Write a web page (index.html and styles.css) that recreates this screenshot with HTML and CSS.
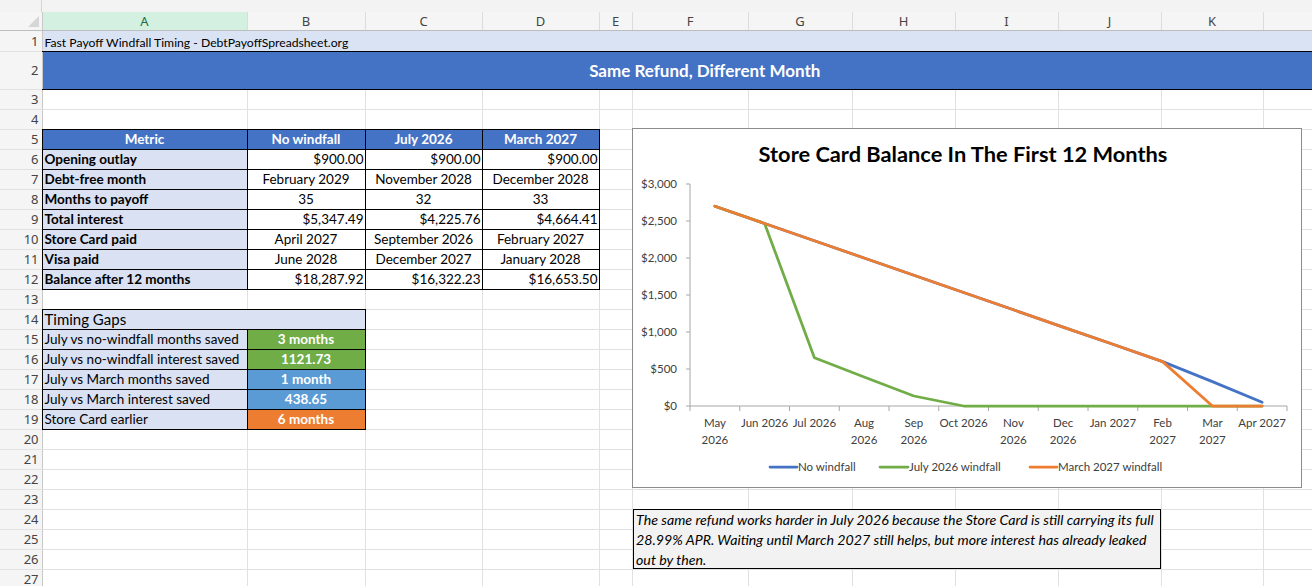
FILE: index.html
```html
<!DOCTYPE html>
<html lang="en">
<head>
    <meta charset="UTF-8">
    <meta name="viewport" content="width=device-width, initial-scale=1.0">
    <title>Fast Payoff Windfall Timing</title>
    <link rel="stylesheet" href="styles.css">
</head>
<body>
<div class="window">
    <div class="strip"><div class="strip-corner"></div></div>
    <table class="grid">
        <colgroup>
            <col class="w-rh"><col class="w-a"><col class="w-b"><col class="w-c"><col class="w-d"><col class="w-e">
            <col class="w-f"><col class="w-g"><col class="w-h"><col class="w-i"><col class="w-j"><col class="w-k"><col class="w-l">
        </colgroup>
        <tr class="colhead">
            <th class="corner"><span class="tri"></span></th>
            <th class="sel">A</th><th>B</th><th>C</th><th>D</th><th>E</th><th>F</th>
            <th>G</th><th>H</th><th>I</th><th>J</th><th>K</th><th></th>
        </tr>
        <tr class="r1"><th>1</th><td colspan="12" class="title-bar">Fast Payoff Windfall Timing - DebtPayoffSpreadsheet.org</td></tr>
        <tr class="r2"><th>2</th><td colspan="12" class="b banner">Same Refund, Different Month</td></tr>
        <tr><th>3</th><td></td><td></td><td></td><td></td><td></td><td></td><td></td><td></td><td></td><td></td><td></td><td></td></tr>
        <tr><th>4</th><td></td><td></td><td></td><td></td><td></td><td></td><td></td><td></td><td></td><td></td><td></td><td></td></tr>
        <tr><th>5</th>
            <td class="b hd">Metric</td><td class="b hd">No windfall</td><td class="b hd">July 2026</td><td class="b hd">March 2027</td>
            <td></td><td></td><td></td><td></td><td></td><td></td><td></td><td></td></tr>
        <tr><th>6</th>
            <td class="b lbl">Opening outlay</td><td class="b num">$900.00</td><td class="b num">$900.00</td><td class="b num">$900.00</td>
            <td></td><td></td><td></td><td></td><td></td><td></td><td></td><td></td></tr>
        <tr><th>7</th>
            <td class="b lbl">Debt-free month</td><td class="b mid">February 2029</td><td class="b mid">November 2028</td><td class="b mid">December 2028</td>
            <td></td><td></td><td></td><td></td><td></td><td></td><td></td><td></td></tr>
        <tr><th>8</th>
            <td class="b lbl">Months to payoff</td><td class="b mid">35</td><td class="b mid">32</td><td class="b mid">33</td>
            <td></td><td></td><td></td><td></td><td></td><td></td><td></td><td></td></tr>
        <tr><th>9</th>
            <td class="b lbl">Total interest</td><td class="b num">$5,347.49</td><td class="b num">$4,225.76</td><td class="b num">$4,664.41</td>
            <td></td><td></td><td></td><td></td><td></td><td></td><td></td><td></td></tr>
        <tr><th>10</th>
            <td class="b lbl">Store Card paid</td><td class="b mid">April 2027</td><td class="b mid">September 2026</td><td class="b mid">February 2027</td>
            <td></td><td></td><td></td><td></td><td></td><td></td><td></td><td></td></tr>
        <tr><th>11</th>
            <td class="b lbl">Visa paid</td><td class="b mid">June 2028</td><td class="b mid">December 2027</td><td class="b mid">January 2028</td>
            <td></td><td></td><td></td><td></td><td></td><td></td><td></td><td></td></tr>
        <tr><th>12</th>
            <td class="b lbl">Balance after 12 months</td><td class="b num">$18,287.92</td><td class="b num">$16,322.23</td><td class="b num">$16,653.50</td>
            <td></td><td></td><td></td><td></td><td></td><td></td><td></td><td></td></tr>
        <tr><th>13</th><td></td><td></td><td></td><td></td><td></td><td></td><td></td><td></td><td></td><td></td><td></td><td></td></tr>
        <tr><th>14</th>
            <td colspan="2" class="b gap-title">Timing Gaps</td>
            <td></td><td></td><td></td><td></td><td></td><td></td><td></td><td></td><td></td><td></td></tr>
        <tr><th>15</th>
            <td class="b gap">July vs no-windfall months saved</td><td class="b badge green">3 months</td>
            <td></td><td></td><td></td><td></td><td></td><td></td><td></td><td></td><td></td><td></td></tr>
        <tr><th>16</th>
            <td class="b gap">July vs no-windfall interest saved</td><td class="b badge green">1121.73</td>
            <td></td><td></td><td></td><td></td><td></td><td></td><td></td><td></td><td></td><td></td></tr>
        <tr><th>17</th>
            <td class="b gap">July vs March months saved</td><td class="b badge blue">1 month</td>
            <td></td><td></td><td></td><td></td><td></td><td></td><td></td><td></td><td></td><td></td></tr>
        <tr><th>18</th>
            <td class="b gap">July vs March interest saved</td><td class="b badge blue">438.65</td>
            <td></td><td></td><td></td><td></td><td></td><td></td><td></td><td></td><td></td><td></td></tr>
        <tr><th>19</th>
            <td class="b gap">Store Card earlier</td><td class="b badge orange">6 months</td>
            <td></td><td></td><td></td><td></td><td></td><td></td><td></td><td></td><td></td><td></td></tr>
        <tr><th>20</th><td></td><td></td><td></td><td></td><td></td><td></td><td></td><td></td><td></td><td></td><td></td><td></td></tr>
        <tr><th>21</th><td></td><td></td><td></td><td></td><td></td><td></td><td></td><td></td><td></td><td></td><td></td><td></td></tr>
        <tr><th>22</th><td></td><td></td><td></td><td></td><td></td><td></td><td></td><td></td><td></td><td></td><td></td><td></td></tr>
        <tr><th>23</th><td></td><td></td><td></td><td></td><td></td><td></td><td></td><td></td><td></td><td></td><td></td><td></td></tr>
        <tr><th>24</th><td></td><td></td><td></td><td></td><td></td><td></td><td></td><td></td><td></td><td></td><td></td><td></td></tr>
        <tr><th>25</th><td></td><td></td><td></td><td></td><td></td><td></td><td></td><td></td><td></td><td></td><td></td><td></td></tr>
        <tr><th>26</th><td></td><td></td><td></td><td></td><td></td><td></td><td></td><td></td><td></td><td></td><td></td><td></td></tr>
        <tr><th>27</th><td></td><td></td><td></td><td></td><td></td><td></td><td></td><td></td><td></td><td></td><td></td><td></td></tr>
    </table>

    <!-- chart object floating over the sheet -->
    <div class="chart">
        <svg width="668" height="358" viewBox="0 0 668 358">
            <text class="chart-title" x="330" y="33" text-anchor="middle">Store Card Balance In The First 12 Months</text>

            <g class="ylabels" text-anchor="end">
                <text x="44" y="59">$3,000</text>
                <text x="44" y="96">$2,500</text>
                <text x="44" y="133">$2,000</text>
                <text x="44" y="170">$1,500</text>
                <text x="44" y="207">$1,000</text>
                <text x="44" y="244">$500</text>
                <text x="44" y="281">$0</text>
            </g>

            <g class="axis">
                <line x1="57" y1="55" x2="57" y2="277"/>
                <line x1="53" y1="55" x2="57" y2="55"/>
                <line x1="53" y1="92" x2="57" y2="92"/>
                <line x1="53" y1="129" x2="57" y2="129"/>
                <line x1="53" y1="166" x2="57" y2="166"/>
                <line x1="53" y1="203" x2="57" y2="203"/>
                <line x1="53" y1="240" x2="57" y2="240"/>
                <line x1="53" y1="277" x2="654" y2="277"/>
                <line x1="57" y1="277" x2="57" y2="282"/>
                <line x1="106.75" y1="277" x2="106.75" y2="282"/>
                <line x1="156.5" y1="277" x2="156.5" y2="282"/>
                <line x1="206.25" y1="277" x2="206.25" y2="282"/>
                <line x1="256" y1="277" x2="256" y2="282"/>
                <line x1="305.75" y1="277" x2="305.75" y2="282"/>
                <line x1="355.5" y1="277" x2="355.5" y2="282"/>
                <line x1="405.25" y1="277" x2="405.25" y2="282"/>
                <line x1="455" y1="277" x2="455" y2="282"/>
                <line x1="504.75" y1="277" x2="504.75" y2="282"/>
                <line x1="554.5" y1="277" x2="554.5" y2="282"/>
                <line x1="604.25" y1="277" x2="604.25" y2="282"/>
                <line x1="654" y1="277" x2="654" y2="282"/>
            </g>

            <g class="xlabels" text-anchor="middle">
                <text x="81.9" y="298">May</text><text x="81.9" y="315">2026</text>
                <text x="131.6" y="298">Jun 2026</text>
                <text x="181.4" y="298">Jul 2026</text>
                <text x="231.1" y="298">Aug</text><text x="231.1" y="315">2026</text>
                <text x="280.9" y="298">Sep</text><text x="280.9" y="315">2026</text>
                <text x="330.6" y="298">Oct 2026</text>
                <text x="380.4" y="298">Nov</text><text x="380.4" y="315">2026</text>
                <text x="430.1" y="298">Dec</text><text x="430.1" y="315">2026</text>
                <text x="479.9" y="298">Jan 2027</text>
                <text x="529.6" y="298">Feb</text><text x="529.6" y="315">2027</text>
                <text x="579.4" y="298">Mar</text><text x="579.4" y="315">2027</text>
                <text x="629.1" y="298">Apr 2027</text>
            </g>

            <polyline class="series s-blue" points="81.9,77.2 131.6,94.5 181.4,111.7 231.1,129 280.9,146.3 330.6,163.5 380.4,180.8 430.1,198.1 479.9,215.3 529.6,232.6 579.4,252.6 629.1,273.3"/>
            <polyline class="series s-green" points="81.9,77.2 131.6,94.5 181.4,228.7 231.1,248 280.9,267 330.6,277 380.4,277 430.1,277 479.9,277 529.6,277 579.4,277 629.1,277"/>
            <polyline class="series s-orange" points="81.9,77.2 131.6,94.5 181.4,111.7 231.1,129 280.9,146.3 330.6,163.5 380.4,180.8 430.1,198.1 479.9,215.3 529.6,232.6 579.4,277 629.1,277"/>

            <g class="legend">
                <line class="s-blue" x1="137" y1="338" x2="164" y2="338"/>
                <text x="165" y="342">No windfall</text>
                <line class="s-green" x1="247" y1="338" x2="275" y2="338"/>
                <text x="276" y="342">July 2026 windfall</text>
                <line class="s-orange" x1="397" y1="338" x2="424" y2="338"/>
                <text x="425" y="342">March 2027 windfall</text>
            </g>
        </svg>
    </div>

    <div class="note">
        The same refund works harder in July 2026 because the Store Card is still carrying its full<br>
        28.99% APR. Waiting until March 2027 still helps, but more interest has already leaked<br>
        out by then.
    </div>
</div>
</body>
</html>
```

FILE: styles.css
```css
html, body {
    margin: 0;
    overflow: hidden;
    background: #fff;
}
body {
    font-family: Lato, "Liberation Sans", sans-serif;
    color: #000;
}
.window {
    position: relative;
    width: 1312px;
    height: 586px;
    overflow: hidden;
}
.strip {
    height: 12px;
    background: #f3f3f3;
}
.strip-corner {
    width: 41px;
    height: 12px;
    border-right: 1px solid #d4d4d4;
}

/* sheet grid */
.grid {
    border-collapse: collapse;
    table-layout: fixed;
    width: 1402px;
    font-size: 13.5px;
}
.w-rh { width: 42px; }
.w-a { width: 205px; }
.w-b { width: 118px; }
.w-c { width: 117px; }
.w-d { width: 117px; }
.w-e { width: 33px; }
.w-f { width: 116px; }
.w-g { width: 104px; }
.w-h { width: 103px; }
.w-i { width: 103px; }
.w-j { width: 103px; }
.w-k { width: 102px; }
.w-l { width: 140px; }
.grid tr {
    height: 20px;
}
.grid td {
    border: 1px solid #e1e1e1;
    padding: 0 2px;
    white-space: nowrap;
    overflow: hidden;
    vertical-align: middle;
}
.grid th {
    background: #f5f5f5;
    color: #444;
    font-family: "Noto Sans", sans-serif;
    font-weight: normal;
    font-size: 13px;
    text-align: right;
    padding: 0 3px 0 0;
    border: 1px solid #e1e1e1;
    border-right-color: #c8c8c8;
    border-left: none;
}
.colhead {
    height: 18px !important;
}
.colhead th {
    text-align: center;
    padding: 0;
    line-height: 16px;
    border-top: none;
    border-right-color: #dcdcdc;
    border-bottom: 1px solid #bdbdbd;
}
.colhead th.sel {
    background: #d3f0e0;
    color: #1e6e42;
}
.colhead th.corner {
    position: relative;
    border-right-color: #c8c8c8;
}
.tri {
    position: absolute;
    right: 3px;
    bottom: 3px;
    width: 0;
    height: 0;
    border-left: 11px solid transparent;
    border-bottom: 11px solid #d6d6d6;
}

/* black cell borders win over the grid in the collapsing model */
.grid td.b {
    border: 1px double #000;
}

.r1 { height: 21px !important; }
.r2 { height: 38px !important; }
.title-bar {
    background: #dae3f3;
    border-color: #dae3f3 !important;
    font-size: 12.2px;
    vertical-align: bottom !important;
    padding-bottom: 1px !important;
}
.grid td.banner {
    background: #4472c4;
    color: #fff;
    font-weight: bold;
    font-size: 17px;
    text-align: center;
    padding-left: 0;
    padding-right: 36px;
    border-left: none;
    border-right: none;
}

.hd {
    background: #4472c4;
    color: #fff;
    font-weight: bold;
    text-align: center;
}
.lbl {
    background: #d9e1f2;
    font-weight: bold;
}
.num {
    text-align: right;
    padding-right: 1px !important;
}
.mid {
    text-align: center;
}
.gap-title {
    background: #d9e1f2;
    font-size: 15px;
}
.gap {
    background: #d9e1f2;
}
.badge {
    color: #fff;
    font-weight: bold;
    text-align: center;
}
.green { background: #70ad47; }
.blue { background: #5b9bd5; }
.orange { background: #ed7d31; }

/* chart */
.chart {
    position: absolute;
    left: 632px;
    top: 128px;
    width: 670px;
    height: 360px;
    box-sizing: border-box;
    border: 1px solid #8c8c8c;
    background: #fff;
}
.chart svg {
    display: block;
    font-family: Lato, "Liberation Sans", sans-serif;
}
.chart-title {
    font-size: 21.8px;
    font-weight: bold;
    fill: #000;
}
.ylabels text,
.xlabels text,
.legend text {
    font-size: 11.5px;
    fill: #404040;
}
.axis line {
    stroke: #a6a6a6;
    stroke-width: 1;
}
.series {
    fill: none;
    stroke-width: 2.75;
    stroke-linejoin: round;
    stroke-linecap: round;
}
.legend line {
    stroke-width: 2.75;
    stroke-linecap: round;
}
.s-blue { stroke: #4472c4; }
.s-green { stroke: #70ad47; }
.s-orange { stroke: #ed7d31; }

/* text box */
.note {
    position: absolute;
    left: 633px;
    top: 509px;
    width: 528px;
    height: 60px;
    box-sizing: border-box;
    border: 1px solid #000;
    background: #f2f2f2;
    font-style: italic;
    font-size: 14.2px;
    line-height: 20px;
    padding: 0 3px 0 2px;
    white-space: nowrap;
}
```
